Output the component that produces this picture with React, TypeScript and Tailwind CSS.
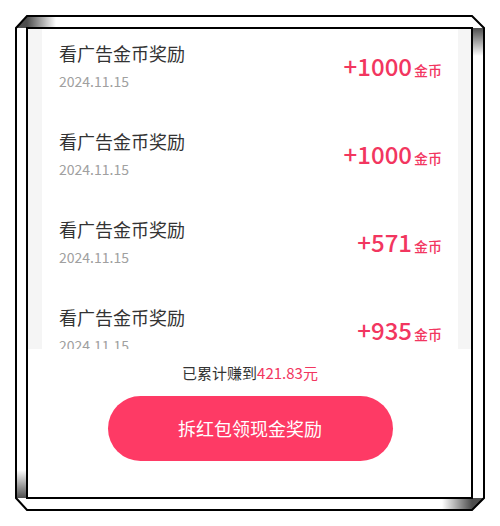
import React from "react";

const rows = [
  { title: "看广告金币奖励", date: "2024.11.15", amount: "+1000" },
  { title: "看广告金币奖励", date: "2024.11.15", amount: "+1000" },
  { title: "看广告金币奖励", date: "2024.11.15", amount: "+571" },
  { title: "看广告金币奖励", date: "2024.11.15", amount: "+935" },
];

function Frame() {
  return (
    <svg
      className="pointer-events-none absolute left-0 top-0"
      width="500"
      height="526"
      viewBox="0 0 500 526"
    >
      <defs>
        <linearGradient id="gTop" gradientUnits="userSpaceOnUse" x1="27" y1="0" x2="56" y2="0">
          <stop offset="0" stopColor="#000" stopOpacity="0.7" />
          <stop offset="1" stopColor="#000" stopOpacity="0" />
        </linearGradient>
        <linearGradient id="gRight" gradientUnits="userSpaceOnUse" x1="0" y1="28" x2="0" y2="56">
          <stop offset="0" stopColor="#000" stopOpacity="0.7" />
          <stop offset="1" stopColor="#000" stopOpacity="0" />
        </linearGradient>
        <linearGradient id="gBottom" gradientUnits="userSpaceOnUse" x1="472" y1="0" x2="442" y2="0">
          <stop offset="0" stopColor="#000" stopOpacity="0.7" />
          <stop offset="1" stopColor="#000" stopOpacity="0" />
        </linearGradient>
        <linearGradient id="gLeft" gradientUnits="userSpaceOnUse" x1="0" y1="498" x2="0" y2="470">
          <stop offset="0" stopColor="#000" stopOpacity="0.7" />
          <stop offset="1" stopColor="#000" stopOpacity="0" />
        </linearGradient>
      </defs>
      <polygon points="27,16 472,16 484,28 16,28" fill="#fff" />
      <polygon points="472,28 484,28 484,498 472,498" fill="#fff" />
      <polygon points="16,498 484,498 472,510 27,510" fill="#fff" />
      <polygon points="16,28 27,28 27,498 16,498" fill="#fff" />
      <polygon points="27,16 472,16 484,28 16,28" fill="url(#gTop)" />
      <polygon points="472,28 484,28 484,498 472,498" fill="url(#gRight)" />
      <polygon points="16,498 484,498 472,510 27,510" fill="url(#gBottom)" />
      <polygon points="16,28 27,28 27,498 16,498" fill="url(#gLeft)" />
      <polygon
        points="27,16 472,16 484,28 484,498 472,510 27,510 16,498 16,28"
        fill="none"
        stroke="#000"
        strokeWidth="2"
        strokeLinejoin="miter"
      />
      <rect x="27" y="28" width="445" height="470" fill="none" stroke="#000" strokeWidth="2" />
    </svg>
  );
}

export default function App() {
  return (
    <div
      className="relative h-[526px] w-[500px] overflow-hidden bg-white pl-[28px] pt-[29px]"
      style={{ fontFamily: '"Noto Sans CJK SC", "Noto Sans", sans-serif' }}
    >
      <div className="flex h-[469px] w-[444px] flex-col items-center bg-white">
        <div className="h-[320px] w-full overflow-hidden bg-[#f5f5f5] px-[14px]">
          <div className="bg-white">
            {rows.map((r, i) => (
              <div key={i} className="flex h-[88px] items-start justify-between pl-[17px] pr-[16px] pt-[12px]">
                <div className="flex flex-col">
                  <div className="h-[24px] text-[18px] leading-[24px] text-[#333333]">{r.title}</div>
                  <div className="mt-[6px] h-[20px] text-[14px] leading-[20px] text-[#a0a0a0]">{r.date}</div>
                </div>
                <div className="flex h-[50px] items-center">
                  <div className="flex items-baseline text-[#f2365f]">
                    <span className="text-[24px] font-medium leading-none">{r.amount}</span>
                    <span className="ml-[2px] text-[14px] font-medium leading-none">金币</span>
                  </div>
                </div>
              </div>
            ))}
          </div>
        </div>
        <div className="mt-[13px] h-[21px] text-[15px] leading-[21px] text-[#333333]">
          已累计赚到<span className="text-[#f2365f]">421.83元</span>
        </div>
        <button className="mt-[13px] flex h-[65px] w-[285px] items-center justify-center rounded-full bg-[#fe3a65] text-[18px] text-white">
          拆红包领现金奖励
        </button>
      </div>
      <Frame />
    </div>
  );
}
